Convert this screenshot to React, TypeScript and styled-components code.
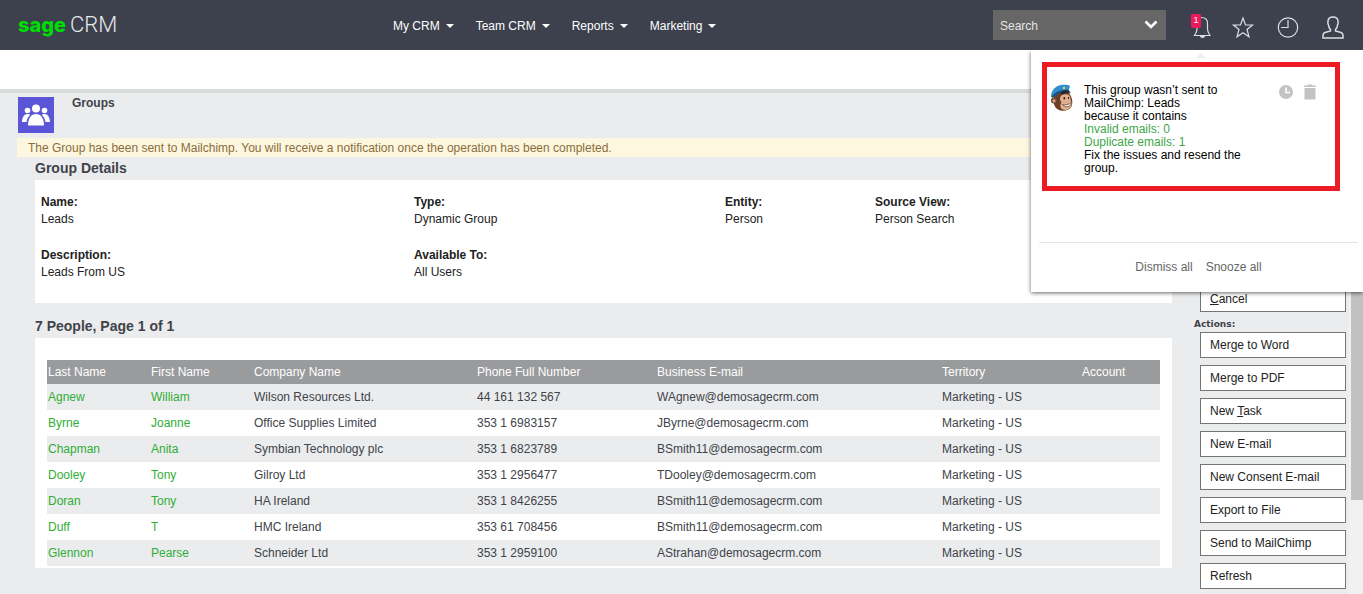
import React from "react";
import styled, { createGlobalStyle } from "styled-components";

const GlobalStyle = createGlobalStyle`
  * { box-sizing: border-box; }
  body {
    margin: 0;
    background: #ebecee;
    color: #404349;
    font: 12px/16px "Liberation Sans", Arial, sans-serif;
  }
  button, input { font: inherit; }
  h1, h2, p, dl, dd { margin: 0; }
`;

const Page = styled.div`
  position: relative;
  display: flex;
  flex-direction: column;
  min-height: 100vh;
`;

const Header = styled.header`
  display: flex;
  align-items: center;
  height: 50px;
  background: #3c414d;
`;

const Logo = styled.a`
  display: flex;
  align-items: baseline;
  gap: 4px;
  flex: 0 0 393px;
  padding-left: 18px;
  line-height: 28px;
  text-decoration: none;
`;

const Brand = styled.span`
  color: #00dc06;
  font-family: Inter, sans-serif;
  font-size: 20px;
  font-weight: 800;
`;

const Product = styled.span`
  color: #e6e8ea;
  font-family: Roboto, sans-serif;
  font-size: 22px;
  font-weight: 300;
`;

const Nav = styled.nav`
  display: flex;
  gap: 22px;
  padding-top: 2px;
`;

const NavButton = styled.button`
  display: flex;
  align-items: center;
  gap: 6px;
  padding: 0;
  border: 0;
  background: none;
  color: #fff;

  &::after {
    content: "";
    border: 4px solid transparent;
    border-top-color: #fff;
    border-bottom: 0;
  }
`;

const SearchBox = styled.form`
  display: flex;
  width: 173px;
  height: 30px;
  margin-left: auto;
  background: #666;
`;

const SearchInput = styled.input`
  flex: 1;
  min-width: 0;
  padding: 2px 7px 0;
  border: 0;
  background: none;
  color: #e4e4e4;
  &::placeholder { color: #e4e4e4; opacity: 1; }
`;

const SearchToggle = styled.button`
  width: 30px;
  padding: 0;
  border: 0;
  background: none;
`;

const Tools = styled.div`
  display: flex;
  gap: 21px;
  padding: 4px 18px 0 20px;
`;

const ToolButton = styled.button`
  position: relative;
  width: 24px;
  height: 24px;
  padding: 0;
  border: 0;
  background: none;
  svg { display: block; overflow: visible; }
`;

const Badge = styled.span`
  position: absolute;
  top: -1px;
  left: 5px;
  width: 10px;
  height: 14px;
  border-radius: 2px;
  background: #ee1a5c;
  color: #fff;
  font-size: 9px;
  line-height: 13px;
`;

const TabBar = styled.div`
  height: 43px;
  border-bottom: 4px solid #dadbdb;
  background: #fff;
`;

const Body = styled.div`
  display: flex;
  flex: 1;
`;

const Main = styled.main`
  flex: 1;
  min-width: 0;
  padding: 4px 0 0 17px;
`;

const TitleRow = styled.div`
  display: flex;
  gap: 18px;
  height: 41px;
  padding-left: 1px;
`;

const TitleIcon = styled.div`
  display: grid;
  place-items: center;
  width: 36px;
  height: 36px;
  background: #5b55d8;
`;

const Title = styled.h1`
  font-size: 12px;
  line-height: 12px;
`;

const Notice = styled.p`
  padding: 2px 11px 0;
  background: #fdf7e0;
  color: #8a6d3b;
  line-height: 17px;
`;

const Section = styled.section`
  padding-left: 18px;
`;

const SectionTitle = styled.h2<{ $spaced?: boolean }>`
  padding-top: ${(p) => (p.$spaced ? 12 : 0)}px;
  font-size: 14px;
  line-height: 23px;
`;

const Details = styled.dl`
  display: grid;
  grid-template-columns: 373fr 311fr 150fr 297fr;
  row-gap: 18px;
  padding: 13px 0 22px 6px;
  background: #fff;
  color: #222;
  line-height: 17px;
`;

const Term = styled.dt`
  font-weight: bold;
  line-height: 18px;
`;

const ListPanel = styled.div`
  padding: 22px 12px 2px;
  background: #fff;
`;

const Table = styled.table`
  width: 100%;
  table-layout: fixed;
  border-collapse: collapse;
`;

const Col = styled.col<{ $width: number }>`
  width: ${(p) => p.$width}px;
`;

const HeadCell = styled.th`
  height: 24px;
  padding: 0 1px;
  background: #9a9b9d;
  color: #fff;
  font-weight: normal;
  text-align: left;
`;

const Row = styled.tr`
  height: 26px;
  &:nth-child(odd) { background: #ebecee; }
`;

const Cell = styled.td`
  padding: 0 1px;
  white-space: nowrap;
`;

const Link = styled.a`
  color: #2fae35;
  text-decoration: none;
`;

const Sidebar = styled.aside`
  display: flex;
  flex-direction: column;
  flex: 0 0 177px;
  padding: 193px 3px 5px 28px;
`;

const ActionsLabel = styled.div`
  margin: 7px 0 2px -6px;
  font: bold 9px/11px "DejaVu Sans", Verdana, sans-serif;
`;

const ActionList = styled.div`
  display: flex;
  flex-direction: column;
  gap: 7px;
`;

const ActionButton = styled.button`
  width: 100%;
  height: 26px;
  padding: 0 9px;
  border: 1px solid #75766f;
  background: #fff;
  color: #222;
  text-align: left;
`;

const ScrollTrack = styled.div`
  flex: 0 0 14px;
  padding-left: 2px;
  background: #f1f1f1;
`;

const ScrollThumb = styled.div`
  height: 407px;
  background: #c1c1c1;
`;

const Popup = styled.div`
  position: absolute;
  top: 51px;
  right: 0;
  width: 332px;
  padding: 11px 5px 0 8px;
  background: #fff;
  box-shadow: 0 1px 4px rgba(0, 0, 0, 0.6);
  clip-path: inset(0 0 -8px -8px);

  &::before {
    content: "";
    position: absolute;
    top: 2px;
    left: 165px;
    border: 5px solid transparent;
    border-top: 0;
    border-bottom-color: #eee;
  }
`;

const Highlight = styled.article`
  display: flex;
  width: 298px;
  height: 129px;
  margin-left: 3px;
  padding: 17px 17px 0 3px;
  border: 5px solid #ed1c24;
`;

const Message = styled.div`
  flex: 1;
  margin-left: 10px;
  color: #000;
  line-height: 13px;
`;

const Line = styled.p<{ $ok?: boolean }>`
  max-width: 160px;
  color: ${(p) => (p.$ok ? "#3fa648" : "#000")};
`;

const MessageTools = styled.div`
  display: flex;
  align-items: flex-start;
  gap: 8px;
`;

const IconButton = styled.button`
  width: 16px;
  height: 16px;
  padding: 0;
  border: 0;
  background: none;
  svg { display: block; }
`;

const PopupFooter = styled.div`
  display: flex;
  justify-content: center;
  gap: 13px;
  margin-top: 51px;
  padding: 16px 0 17px;
  border-top: 1px solid #e5e5e5;
`;

const TextButton = styled.button`
  padding: 0;
  border: 0;
  background: none;
  color: #666;
  line-height: 16px;
`;

const Monkey = () => (
  <svg width="24" height="28" viewBox="0 0 24 28" aria-label="MailChimp" role="img">
    <path d="M4 12C2.500 18 4 23 8 25.500C12 28 19 27 21.500 22.500C23.500 18 21.500 11 18 8L9 9Z" fill="#6b3f26" />
    <circle cx="3.800" cy="16.500" r="2.900" fill="#7c4b31" />
    <circle cx="4" cy="16.800" r="1.600" fill="#d9a384" />
    <path d="M12 11C15 9.500 19 10 20 12.500C21 15 20 16 21.500 18.500C22.500 22 19 26 15.500 26C11 26 9 22.500 11.500 18.500C9.500 16 9.500 12.500 12 11Z" fill="#e0b08e" />
    <path d="M12.500 20.500C15.500 21.500 19 20.500 21.500 18.500C21.500 22.500 15.500 24.500 12.500 20.500Z" fill="#fff" stroke="#5b3522" strokeWidth=".7" />
    <ellipse cx="14.300" cy="14.300" rx=".8" ry="1.200" fill="#26160f" />
    <ellipse cx="18.500" cy="14" rx=".7" ry="1.100" fill="#26160f" />
    <path d="M1 13C1 6 5.500 2 11 1C15 .300 19 1 20 2L18.500 7C11 6 6 9 1.500 13Z" fill="#2f8fce" />
    <path d="M1.500 12.500C6 7.500 12 5 19 6L19.500 8C12 7.500 7 10 2.500 14Z" fill="#1b4f7d" />
    <path d="M11 8.500C14 6 19 6 21 9C18 8.500 15 9 11 10.500Z" fill="#1c222b" />
    <circle cx="14" cy="4" r="1.200" fill="#e8d27a" />
  </svg>
);

const PeopleIcon = () => (
  <svg width="28" height="22" viewBox="0 0 28 22" fill="#fff" aria-hidden="true">
    <circle cx="14" cy="4.500" r="4" />
    <circle cx="5.500" cy="6.500" r="2.800" />
    <circle cx="22.500" cy="6.500" r="2.800" />
    <path d="M6 21.500C6 14.500 9 10 14 10S22 14.500 22 21.500Z" />
    <path d="M0 18C.3 13.500 2 10 5.500 10C7 10 7.800 10.500 8.300 11C6 13 4.800 15.500 4.500 18Z" />
    <path d="M28 18C27.700 13.500 26 10 22.500 10C21 10 20.200 10.500 19.700 11C22 13 23.200 15.500 23.500 18Z" />
  </svg>
);

const iconProps = {
  width: 24,
  height: 24,
  viewBox: "0 0 24 24",
  fill: "none",
  stroke: "#dcdfe2",
  strokeWidth: 1.2,
  "aria-hidden": true,
};

const columns = [
  { label: "Last Name", width: 103 },
  { label: "First Name", width: 103 },
  { label: "Company Name", width: 223 },
  { label: "Phone Full Number", width: 180 },
  { label: "Business E-mail", width: 285 },
  { label: "Territory", width: 140 },
  { label: "Account", width: 79 },
];

const people = [
  ["Agnew", "William", "Wilson Resources Ltd.", "44 161 132 567", "WAgnew@demosagecrm.com"],
  ["Byrne", "Joanne", "Office Supplies Limited", "353 1 6983157", "JByrne@demosagecrm.com"],
  ["Chapman", "Anita", "Symbian Technology plc", "353 1 6823789", "BSmith11@demosagecrm.com"],
  ["Dooley", "Tony", "Gilroy Ltd", "353 1 2956477", "TDooley@demosagecrm.com"],
  ["Doran", "Tony", "HA Ireland", "353 1 8426255", "BSmith11@demosagecrm.com"],
  ["Duff", "T", "HMC Ireland", "353 61 708456", "BSmith11@demosagecrm.com"],
  ["Glennon", "Pearse", "Schneider Ltd", "353 1 2959100", "AStrahan@demosagecrm.com"],
];

const details = [
  ["Name:", "Leads"],
  ["Type:", "Dynamic Group"],
  ["Entity:", "Person"],
  ["Source View:", "Person Search"],
  ["Description:", "Leads From US"],
  ["Available To:", "All Users"],
];

const actions: React.ReactNode[] = [
  "Merge to Word",
  "Merge to PDF",
  <>New <u>T</u>ask</>,
  "New E-mail",
  "New Consent E-mail",
  "Export to File",
  "Send to MailChimp",
  "Refresh",
];

export default function App() {
  return (
    <Page>
      <GlobalStyle />
      <Header>
        <Logo href="#">
          <Brand>sage</Brand>
          <Product>CRM</Product>
        </Logo>
        <Nav>
          {["My CRM", "Team CRM", "Reports", "Marketing"].map((item) => (
            <NavButton key={item}>{item}</NavButton>
          ))}
        </Nav>
        <SearchBox>
          <SearchInput placeholder="Search" aria-label="Search" />
          <SearchToggle type="button" aria-label="Search options">
            <svg width="14" height="9" viewBox="0 0 14 9" fill="none" stroke="#fff" strokeWidth="2.600" aria-hidden="true">
              <path d="M1.500 1.500L7 7L12.500 1.500" />
            </svg>
          </SearchToggle>
        </SearchBox>
        <Tools>
          <ToolButton aria-label="Notifications">
            <svg {...iconProps}>
              <path d="M15 2.500C19 2.500 21.500 4.500 21.500 8V14C21.500 17 22.500 18.500 24 20.500H8.500C10 18.500 11 17 11 14V8" />
              <path d="M14 21H19C19 23.500 14 23.500 14 21Z" fill="#dcdfe2" stroke="none" />
            </svg>
            <Badge>1</Badge>
          </ToolButton>
          <ToolButton aria-label="Favourites">
            <svg {...iconProps}>
              <path d="M12 3L14.500 10H21.500L16 14.500L18 21.800L12 17.800L6 21.800L8 14.500L2.500 10H9.500Z" />
            </svg>
          </ToolButton>
          <ToolButton aria-label="Recent">
            <svg {...iconProps}>
              <circle cx="12" cy="12.500" r="9.700" />
              <path d="M12 5V12.500H5" />
            </svg>
          </ToolButton>
          <ToolButton aria-label="Profile">
            <svg {...iconProps} strokeWidth={1.5}>
              <path d="M9.500 14.500C8 13 7.500 11.500 7.500 10C6.500 9 6.800 7.500 7 6C7.300 3.300 9.300 2 12 2S16.700 3.300 17 6C17.200 7.500 17.500 9 16.500 10C16.500 11.500 16 13 14.500 14.500V16L20 17.500C21.500 18 22 19 22 20.500V23H2V20.500C2 19 2.500 18 4 17.500L9.500 16Z" />
            </svg>
          </ToolButton>
        </Tools>
      </Header>
      <TabBar />
      <Body>
        <Main>
          <TitleRow>
            <TitleIcon><PeopleIcon /></TitleIcon>
            <Title>Groups</Title>
          </TitleRow>
          <Notice>
            The Group has been sent to Mailchimp. You will receive a notification once the operation has been completed.
          </Notice>
          <Section>
            <SectionTitle>Group Details</SectionTitle>
            <Details>
              {details.map(([term, value]) => (
                <div key={term}>
                  <Term>{term}</Term>
                  <dd>{value}</dd>
                </div>
              ))}
            </Details>
          </Section>
          <Section>
            <SectionTitle $spaced>7 People, Page 1 of 1</SectionTitle>
            <ListPanel>
              <Table>
                <colgroup>
                  {columns.map((c) => <Col key={c.label} $width={c.width} />)}
                </colgroup>
                <thead>
                  <tr>
                    {columns.map((c) => <HeadCell key={c.label} scope="col">{c.label}</HeadCell>)}
                  </tr>
                </thead>
                <tbody>
                  {people.map(([last, first, company, phone, email]) => (
                    <Row key={last}>
                      <Cell><Link href="#">{last}</Link></Cell>
                      <Cell><Link href="#">{first}</Link></Cell>
                      <Cell>{company}</Cell>
                      <Cell>{phone}</Cell>
                      <Cell>{email}</Cell>
                      <Cell>Marketing - US</Cell>
                      <Cell />
                    </Row>
                  ))}
                </tbody>
              </Table>
            </ListPanel>
          </Section>
        </Main>
        <Sidebar>
          <ActionButton><u>C</u>ancel</ActionButton>
          <ActionsLabel>Actions:</ActionsLabel>
          <ActionList>
            {actions.map((label, i) => <ActionButton key={i}>{label}</ActionButton>)}
          </ActionList>
        </Sidebar>
        <ScrollTrack><ScrollThumb /></ScrollTrack>
      </Body>
      <Popup>
        <Highlight>
          <Monkey />
          <Message>
            <Line>This group wasn’t sent to</Line>
            <Line>MailChimp: Leads</Line>
            <Line>because it contains</Line>
            <Line $ok>Invalid emails: 0</Line>
            <Line $ok>Duplicate emails: 1</Line>
            <Line>Fix the issues and resend the group.</Line>
          </Message>
          <MessageTools>
            <IconButton aria-label="Snooze">
              <svg width="16" height="16" viewBox="0 0 16 16" aria-hidden="true">
                <circle cx="8" cy="8" r="7" fill="#c3c3c3" />
                <path d="M8 3.500V8.500H12" fill="none" stroke="#fff" strokeWidth="1.600" />
              </svg>
            </IconButton>
            <IconButton aria-label="Dismiss">
              <svg width="16" height="16" viewBox="0 0 16 16" fill="#c3c3c3" aria-hidden="true">
                <path d="M2 1.500H5.500V.5H10.500V1.500H14V3H2ZM2.500 4H13.500V15.500H2.500Z" />
              </svg>
            </IconButton>
          </MessageTools>
        </Highlight>
        <PopupFooter>
          <TextButton>Dismiss all</TextButton>
          <TextButton>Snooze all</TextButton>
        </PopupFooter>
      </Popup>
    </Page>
  );
}
